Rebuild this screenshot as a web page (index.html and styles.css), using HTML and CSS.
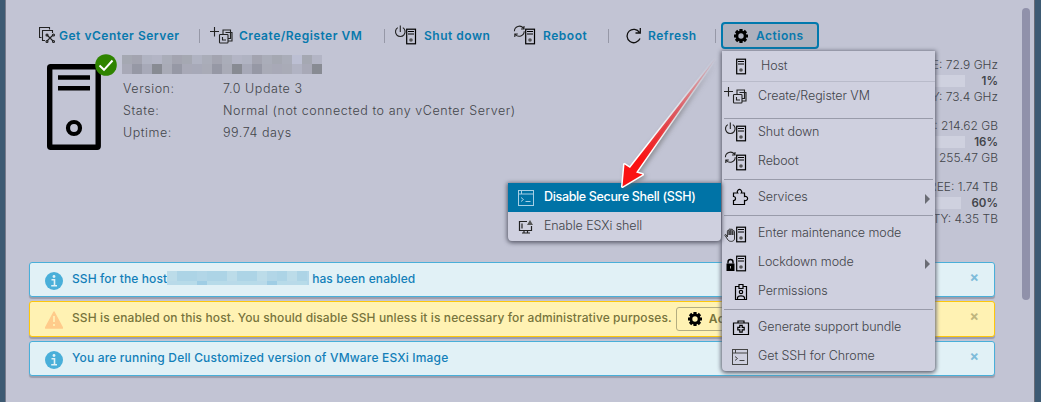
FILE: index.html
```html
<!DOCTYPE html>
<html lang="en">
<head>
<meta charset="utf-8">
<title>Host</title>
<link rel="stylesheet" href="styles.css">
</head>
<body>
<svg class="defs" aria-hidden="true">
  <defs>
    <g id="server">
      <rect x="12.7" y="4.2" width="8.8" height="14.6" fill="none" stroke="#000" stroke-width="1.2"/>
      <path d="M14 6.5h6M14 9h6" stroke="#000" stroke-width="1"/>
      <circle cx="17" cy="15" r="1.8" fill="#555"/>
    </g>
    <g id="power" fill="none" stroke="#222" stroke-width="1.1">
      <path d="M3.8 2.6a4.8 4.8 0 1 0 5 0M6.3 .5v6.5"/>
    </g>
    <g id="cycle" fill="none" stroke="#222" stroke-width="1.1">
      <path d="M1.4 6.2a5 5 0 0 1 9-3M11 1v3H8M11.2 6.3a5 5 0 0 1-8.8 3.2M1.8 12V9h3"/>
    </g>
    <g id="vm" fill="none" stroke="#222" stroke-width="1.1">
      <path d="M0 6.5h9M4.5 2v9.5"/>
      <rect x="9.5" y="9.5" width="8.5" height="8.5" rx=".8"/>
      <path d="M13 9V5h7.500v8.500H18M15.500 7.500h6.500v8.500h-4M12.500 12v3h3.500"/>
    </g>
    <g id="gear">
      <path d="M7 0v14M0 7h14M2 2l10 10M12 2L2 12" stroke="#000" stroke-width="3.2"/>
      <circle cx="7" cy="7" r="4.1" fill="none" stroke="#000" stroke-width="2.8"/>
      <circle cx="7" cy="7" r="2.7" fill="var(--hole)"/>
    </g>
    <g id="terminal" fill="none" stroke="currentColor" stroke-width="1">
      <rect x="8.5" y="3.5" width="15" height="15"/>
      <path d="M8.5 7h15M11.5 3.5V7M11 10.5l2.5 2-2.5 2M15.5 14.5h5"/>
    </g>
    <g id="info">
      <circle cx="9" cy="9" r="9" fill="#49afd9"/>
      <circle cx="9" cy="4.5" r="1.4" fill="#e1f1f6"/>
      <path d="M6.5 7.7h3v5.5M6.2 13.7h5.8" fill="none" stroke="#e1f1f6" stroke-width="1.6"/>
    </g>
  </defs>
</svg>

<div class="frame">
  <main class="page">
    <nav class="toolbar">
      <a class="tool vcenter"><svg viewBox="0 0 18 18" width="18" height="18" fill="none" stroke="#222" stroke-width="1.1"><path d="M2.500 10.500H.5V.5h10v2M6 13.500H3.500v-10h10V6"/><path d="M8 8l6 6M14 8l-6 6"/><circle cx="8" cy="8" r="1"/><circle cx="14.500" cy="8" r="1"/><circle cx="8" cy="14.500" r="1"/><circle cx="14.500" cy="14.500" r="1"/></svg><span>Get vCenter Server</span></a>
      <a class="tool create"><svg viewBox="0 0 26 22" width="26" height="22"><use href="#vm"/></svg><span>Create/Register VM</span></a>
      <a class="tool shut"><svg viewBox="0 0 26 22" width="26" height="22"><use href="#power"/><use href="#server"/></svg><span>Shut down</span></a>
      <a class="tool reboot"><svg viewBox="0 0 26 22" width="26" height="22"><use href="#cycle"/><use href="#server"/></svg><span>Reboot</span></a>
      <a class="tool refresh"><svg viewBox="0 0 16 16" width="16" height="16" fill="none" stroke="#111" stroke-width="1.3"><path d="M14 10.500A6.700 6.700 0 1 1 13.500 4.500M14.300 0v5H9.500"/></svg><span>Refresh</span></a>
      <button class="actions"><svg viewBox="0 0 14 14" width="14" height="14"><use href="#gear"/></svg><span>Actions</span></button>
    </nav>

    <section class="summary">
      <div class="machine">
        <svg viewBox="0 0 72 98" width="72" height="98">
          <rect x="2.700" y="14.700" width="48.500" height="80.500" rx="1" fill="none" stroke="#000" stroke-width="5.400"/>
          <path d="M11 25.500h32M11 36.300h32" stroke="#000" stroke-width="4.600"/>
          <circle cx="27" cy="76" r="6" fill="none" stroke="#000" stroke-width="4.200"/>
          <circle cx="59" cy="13" r="10.800" fill="#2f8400"/>
          <path d="M52.500 13.500l4.500 4.300 8.500-9.300" fill="none" stroke="#fff" stroke-width="2"/>
        </svg>
      </div>
      <div class="facts">
        <div class="redacted name"><i></i><i></i><i></i><i></i><i></i><i></i><i></i><i></i><i></i><i></i><i></i><i></i><i></i><i></i><i></i><i></i><i></i><i></i><i></i><i></i></div>
        <dl>
          <dt>Version:</dt><dd>7.0 Update 3</dd>
          <dt>State:</dt><dd>Normal (not connected to any vCenter Server)</dd>
          <dt>Uptime:</dt><dd>99.74 days</dd>
        </dl>
      </div>
      <div class="usage">
        <div class="meter"><span>FREE: 72.9 GHz</span><b><i class="bar"></i>1%</b><span>CAPACITY: 73.4 GHz</span></div>
        <div class="meter"><span>FREE: 214.62 GB</span><b><i class="bar"></i>16%</b><span>CAPACITY: 255.47 GB</span></div>
        <div class="meter"><span>FREE: 1.74 TB</span><b><i class="bar short"></i>60%</b><span>CAPACITY: 4.35 TB</span></div>
      </div>
    </section>

    <section class="alerts">
      <div class="alert"><svg viewBox="0 0 18 18" width="18" height="18"><use href="#info"/></svg><span>SSH for the host</span><span class="redacted host"><i></i><i></i><i></i><i></i><i></i><i></i><i></i><i></i><i></i><i></i><i></i><i></i><i></i><i></i></span><span>has been enabled</span><span class="close">×</span></div>
      <div class="alert warn"><svg viewBox="0 0 18 18" width="18" height="18"><path d="M9 1L17.500 17H.5z" fill="#ffcb8b" stroke="#ffcb8b" stroke-width="1.500" stroke-linejoin="round"/><path d="M9 5v6M9 13v2" stroke="#fff3b5" stroke-width="1.700"/></svg><span>SSH is enabled on this host. You should disable SSH unless it is necessary for administrative purposes.</span><button><svg viewBox="0 0 14 14" width="14" height="14"><use href="#gear"/></svg>Actions</button><span class="close">×</span></div>
      <div class="alert"><svg viewBox="0 0 18 18" width="18" height="18"><use href="#info"/></svg><span class="wide">You are running Dell Customized version of VMware ESXi Image</span><span class="close">×</span></div>
    </section>
  </main>
  <div class="scrollbar"></div>
</div>

<div class="menu">
  <div class="item head"><svg viewBox="0 0 26 22"><use href="#server"/></svg><span>Host</span></div>
  <div class="item first"><svg viewBox="0 0 26 22"><use href="#vm"/></svg><span>Create/Register VM</span></div>
  <hr class="top">
  <div class="item"><svg viewBox="0 0 26 22"><use href="#power"/><use href="#server"/></svg><span>Shut down</span></div>
  <div class="item"><svg viewBox="0 0 26 22"><use href="#cycle"/><use href="#server"/></svg><span>Reboot</span></div>
  <hr>
  <div class="item"><svg viewBox="0 0 26 22" fill="none" stroke="#000" stroke-width="1.200"><path d="M9.500 6h4.200a2.200 2.200 0 1 1 3.600 0h3.200v3.500a2.200 2.200 0 1 1 0 4V17.500h-11v-4a2 2 0 1 0 0-4z"/></svg><span>Services</span><i class="more"></i></div>
  <hr>
  <div class="item"><svg viewBox="0 0 26 22"><path d="M1 12.500l3 4.500c1.500 2 6 2 6.500-1V8.500c0-1.200-1.500-1.200-1.700 0V12 7c-.2-1.200-1.800-1.200-1.900 0v5V6.600c-.2-1.100-1.800-1-1.800.2V12 8c-.2-1.100-1.700-1-1.700.2V14L2 11.700c-.8-.5-1.500.2-1 .8z" fill="none" stroke="#222" stroke-width=".9"/><use href="#server"/></svg><span>Enter maintenance mode</span></div>
  <div class="item"><svg viewBox="0 0 26 22"><rect x="2.500" y="11.500" width="8" height="7.500"/><path d="M4 11.500V10a2.500 2.500 0 0 1 5 0v1.500" fill="none" stroke="#000" stroke-width="1.400"/><path d="M6.500 14v2.500" stroke="#aaa" stroke-width="1"/><use href="#server"/></svg><span>Lockdown mode</span><i class="more"></i></div>
  <div class="item"><svg viewBox="0 0 26 22" fill="none" stroke="#000" stroke-width="1.200"><path d="M14.500 5.500h-3v13h11v-13h-3M15 3.500h4v4h-4z"/><circle cx="17" cy="11" r="1.700"/><path d="M13.500 18v-1.500c.7-2.200 6.300-2.200 7 0V18"/></svg><span>Permissions</span></div>
  <hr>
  <div class="item"><svg viewBox="0 0 26 22" fill="none" stroke="#000" stroke-width="1.200"><path d="M9.500 6h15v11.500h-15zM14 6V4h6v2"/><path d="M15.800 8.300h2.400v2h2v2.500h-2v2.300h-2.400v-2.300h-2v-2.500h2z"/></svg><span>Generate support bundle</span></div>
  <div class="item"><svg class="term" viewBox="0 0 26 22"><use href="#terminal"/></svg><span>Get SSH for Chrome</span></div>
</div>

<div class="submenu">
  <div class="sub on"><svg viewBox="8 3 16 16" width="16" height="16"><use href="#terminal"/></svg><span>Disable Secure Shell (SSH)</span></div>
  <div class="sub"><svg viewBox="0 0 16 16" width="16" height="16" fill="none" stroke="#222" stroke-width="1.200"><path d="M9 2.500H1.500v9h12V7M4 4.500v5M6 11.500v2.500M9.500 11.500v2.500M4 14h8"/><path d="M12 1l3 5H9z" fill="#555" stroke="none"/></svg><span>Enable ESXi shell</span></div>
</div>

<svg class="pointer" viewBox="600 40 130 160" width="130" height="160">
  <defs>
    <linearGradient id="fade" gradientUnits="userSpaceOnUse" x1="717" y1="57" x2="640" y2="160"><stop offset="0" stop-color="#e33" stop-opacity="0"/><stop offset=".5" stop-color="#dc4a52" stop-opacity=".85"/><stop offset="1" stop-color="#fb1212"/></linearGradient>
    <linearGradient id="edge" gradientUnits="userSpaceOnUse" x1="717" y1="57" x2="650" y2="147"><stop offset="0" stop-color="#fff" stop-opacity="0"/><stop offset="1" stop-color="#fff"/></linearGradient>
  </defs>
  <path d="M622.500 186.500L624.500 164.500L630 168L717 56.500L636 172.500L642.500 174.500z" fill="url(#fade)" stroke="url(#edge)" stroke-width="3" stroke-linejoin="round" paint-order="stroke"/>
</svg>
</body>
</html>
```
FILE: styles.css
```css
* { box-sizing: border-box; }
body { margin: 0; width: 1041px; height: 402px; overflow: hidden; position: relative; font: 300 12.5px/16px Inter, "Open Sans", sans-serif; color: #42444a; }
.defs { position: absolute; width: 0; height: 0; }
svg { display: block; flex: none; }
span { white-space: nowrap; }
.frame { display: flex; height: 402px; background: #c2c4d4; border: solid #3d5a73; border-width: 0 6px 0 5px; box-shadow: inset 1px 0 #777b8c, inset -1px 0 #686b76; }
.page { width: 1017px; padding: 22px 0 0 24px; }
.scrollbar { width: 8px; height: 292px; margin-top: 8px; border-radius: 4px; background: #9091aa; }

.toolbar { display: flex; align-items: center; height: 27px; padding-left: 10px; }
.tool { display: flex; align-items: center; height: 14px; color: #0879ad; font-weight: 600; font-size: 12px; letter-spacing: .52px; border-right: 1px solid #9698a7; }
.vcenter { width: 161px; }
.vcenter svg { margin-right: 2px; }
.create { width: 185px; padding-left: 10px; }
.create svg { margin-right: 3px; }
.shut { width: 119px; padding-left: 9px; border: 0; }
.shut svg { margin-right: 4px; }
.reboot { width: 105px; padding-left: 9px; }
.reboot svg { margin-right: 4px; }
.refresh { width: 107px; padding-left: 17px; }
.refresh svg { margin-right: 6px; }
.actions { --hole: #adb1be; display: flex; align-items: center; width: 98px; height: 27px; margin-left: 5px; padding: 0 0 0 11px; gap: 8px; border: 2px solid #0079ad; border-radius: 4px; background: #adb1be; color: #0879ad; font: 600 12px/16px Inter, sans-serif; letter-spacing: .5px; }

.summary { display: flex; height: 213px; }
.machine { padding: 3px 0 0 18px; width: 93px; }
.facts { padding-top: 6px; width: 745px; }
.redacted { display: flex; background: #a9abb8; }
.name { width: 200px; height: 19px; }
.redacted i { width: 10px; height: 100%; background: linear-gradient(#aaadb9 50%, #a9abb7 50%); }
.redacted i:nth-child(3n+1) { background: linear-gradient(#a5a8b2 50%, #a8a9b7 50%); }
.redacted i:nth-child(4n+2) { background: linear-gradient(#a3a4b0 50%, #9698a5 50%); }
.redacted i:nth-child(5n+3) { background: linear-gradient(#b0b3c2 50%, #a7a9b8 50%); }
.redacted i:nth-child(8n+4) { background: linear-gradient(#b3b5c5 50%, #888b93 50%); }
.redacted i:nth-child(18) { background: linear-gradient(#bcbfd3 50%, #b1b3c3 50%); }
dl { display: grid; grid-template-columns: 100px 1fr; grid-auto-rows: 22px; margin: 4px 0 0 1px; line-height: 22px; letter-spacing: .55px; }
dd { margin: 0; }
.usage { width: 131px; padding-top: 8px; display: flex; flex-direction: column; gap: 13px; text-align: right; font-size: 12px; }
.meter { display: flex; flex-direction: column; height: 48px; align-items: flex-end; }
.meter > * { height: 16px; line-height: 16px; white-space: nowrap; }
.meter b { display: flex; justify-content: space-between; align-items: center; width: 131px; font-weight: 600; font-size: 11.500px; }
.bar { width: 98px; height: 12px; background: #cfd1df; }
.bar.short { width: 94px; }

.alerts { width: 966px; display: flex; flex-direction: column; gap: 4px; }
.alert { --hole: #fff3b5; display: flex; height: 35px; padding: 1px 15px 0 15px; border: 1px solid #49afd9; border-radius: 3px; background: #e1f1f6; box-shadow: 0 2px 1px #9b9dac; color: #137fb9; font-weight: 500; font-size: 12px; line-height: 30px; letter-spacing: .1px; }
.alert > svg { margin: 8px 9px 0 0; }
.alert.warn { height: 36px; background: #fff2b3; border-color: #fdc70b; color: #77743c; }
.wide { letter-spacing: .17px; }
.alert button { display: flex; align-items: center; gap: 7px; width: 90px; height: 24px; margin: 4px 0 0 4px; padding: 0 11px; border: 1px solid #b4ad80; border-radius: 3px; background: none; color: #77743c; font: 600 12px/16px Inter, sans-serif; letter-spacing: .5px; }
.close { margin-left: auto; font: 700 14px/25px Inter, sans-serif; color: #7ebcda; }
.warn .close { color: #c0b67f; }
.host { width: 142px; height: 14px; margin: 7px 3px 0 0; background: #b3d7e9; }
.host i:nth-child(n) { background: linear-gradient(#add4e6 70%, #b7dbe9 70%); }
.host i:nth-child(3n+1) { background: linear-gradient(#bcdce9 70%, #b9dae9 70%); }
.host i:nth-child(7n+4) { background: linear-gradient(#b2d6e7 70%, #9fcde4 70%); }

.menu { position: absolute; left: 722px; top: 51px; width: 213px; height: 320px; background: #cfd0df; border-radius: 0 0 4px 4px; box-shadow: 0 1px 4px 1px #5b5d6c; letter-spacing: -.08px; }
.item { display: flex; align-items: center; height: 29px; padding-left: 2px; }
.item svg { width: 26px; height: 22px; margin-right: 8px; }
.item span { padding-bottom: 1px; }
.head { height: 31px; border-bottom: 1px solid #b9bbca; }
.head span { padding-left: 3px; }
.first { height: 28px; }
hr { height: 1px; margin: 3px 2px; border: 0; background: #999baa; }
hr.top { margin: 8px 2px -1px; }
.more { margin: 3px 5px 0 auto; border-left: 5px solid #6a6c74; border-top: 5px solid transparent; border-bottom: 5px solid transparent; }
.term { color: #444; }
.submenu { position: absolute; left: 508px; top: 183px; width: 213px; height: 58px; border-radius: 0 0 4px 4px; overflow: hidden; background: #cfd0df; box-shadow: 0 1px 4px 1px #5b5d6c; }
.sub { display: flex; align-items: center; height: 29px; padding-left: 10px; gap: 10px; letter-spacing: -.1px; }
.sub span { padding-bottom: 1px; }
.on { background: #0073a6; color: #fff; font-weight: 500; letter-spacing: -.34px; }
.on svg { color: #a8d0e5; }
.pointer { position: absolute; left: 600px; top: 40px; filter: drop-shadow(2px 2px 2px #6668); }
```
